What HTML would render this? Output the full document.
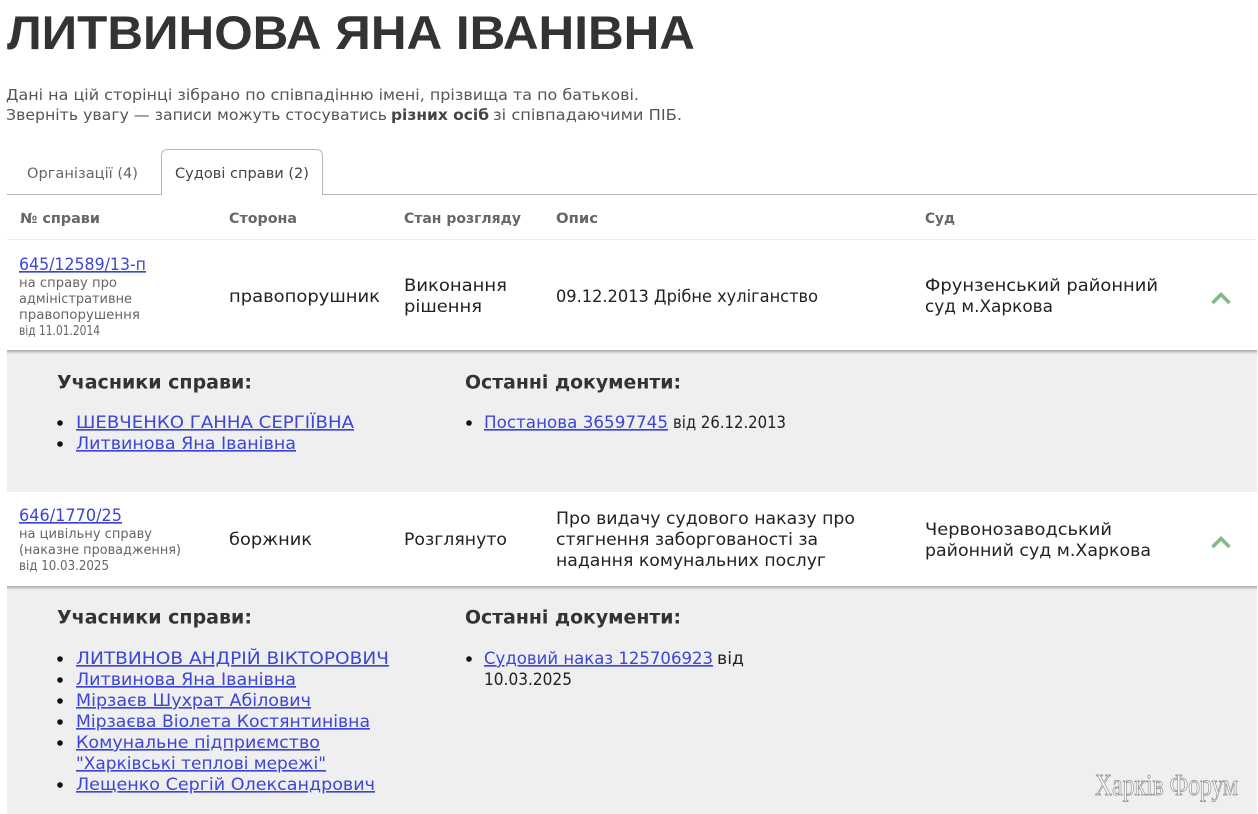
<!DOCTYPE html>
<html lang="uk"><head><meta charset="utf-8"><title>Литвинова Яна Іванівна</title>
<style>
html,body{margin:0;padding:0;background:#fff;width:1258px;height:814px;overflow:hidden}
svg{display:block}
text{font-family:"DejaVu Sans","Liberation Sans",sans-serif;font-size:16.5px;fill:#222;white-space:pre}
.t{font-family:"Liberation Sans",sans-serif;font-size:47px;font-weight:bold;fill:#333}
.p{fill:#555;font-size:15.5px}
.b{font-weight:bold;fill:#444}
.tab{fill:#666;font-size:14.5px}
.th{font-weight:bold;font-size:14px;fill:#666}
.s{font-size:13px;fill:#666}
.h{font-weight:bold;font-size:19px;fill:#333}
.l{fill:#3b46d8}
.w{font-family:"Liberation Serif",serif;font-size:31px;fill:#fff;stroke:#8a8a8a;stroke-width:.8px}
</style></head><body>
<svg width="1258" height="814" viewBox="0 0 1258 814" xmlns="http://www.w3.org/2000/svg">
<defs><linearGradient id="g" x1="0" y1="0" x2="0" y2="1"><stop offset="0" stop-color="#a8a8a8"/><stop offset="1" stop-color="#efefef"/></linearGradient></defs>
<text class="t" x="7" y="49" textLength="688" lengthAdjust="spacingAndGlyphs">ЛИТВИНОВА ЯНА ІВАНІВНА</text>
<text class="p" x="6" y="100" textLength="633" lengthAdjust="spacingAndGlyphs">Дані на цій сторінці зібрано по співпадінню імені, прізвища та по батькові.</text>
<text class="p" x="6" y="120" textLength="381" lengthAdjust="spacingAndGlyphs">Зверніть увагу — записи можуть стосуватись</text>
<text class="p b" x="391" y="120" textLength="98" lengthAdjust="spacingAndGlyphs">різних осіб</text>
<text class="p" x="493" y="120" textLength="189" lengthAdjust="spacingAndGlyphs">зі співпадаючими ПІБ.</text>

<path d="M7 194.5H161.5V155a5.500 5.500 0 0 1 5.500-5.500H317a5.500 5.500 0 0 1 5.500 5.500V194.500H1257" fill="none" stroke="#b5b5b5"/>
<text class="tab" x="27" y="178" textLength="111" lengthAdjust="spacingAndGlyphs">Організації (4)</text>
<text class="tab" x="175" y="178" textLength="134" lengthAdjust="spacingAndGlyphs" style="fill:#444">Судові справи (2)</text>

<text class="th" x="20" y="223" textLength="80" lengthAdjust="spacingAndGlyphs">№ справи</text>
<text class="th" x="229" y="223" textLength="68" lengthAdjust="spacingAndGlyphs">Сторона</text>
<text class="th" x="404" y="223" textLength="117" lengthAdjust="spacingAndGlyphs">Стан розгляду</text>
<text class="th" x="556" y="223" textLength="42" lengthAdjust="spacingAndGlyphs">Опис</text>
<text class="th" x="925" y="223" textLength="30" lengthAdjust="spacingAndGlyphs">Суд</text>
<rect x="7" y="239" width="1250" height="1" fill="#eeeeee"/>

<!-- row 1 -->
<text class="l" x="19" y="270" textLength="127" lengthAdjust="spacingAndGlyphs" text-decoration="underline">645/12589/13-п</text>
<text class="s" x="19" y="287" textLength="98" lengthAdjust="spacingAndGlyphs">на справу про</text>
<text class="s" x="19" y="303" textLength="113" lengthAdjust="spacingAndGlyphs">адміністративне</text>
<text class="s" x="19" y="319" textLength="121" lengthAdjust="spacingAndGlyphs">правопорушення</text>
<text class="s" x="19" y="335" textLength="81" lengthAdjust="spacingAndGlyphs">від 11.01.2014</text>
<text x="229" y="302" textLength="151" lengthAdjust="spacingAndGlyphs">правопорушник</text>
<text x="404" y="291" textLength="103" lengthAdjust="spacingAndGlyphs">Виконання</text>
<text x="404" y="312" textLength="78" lengthAdjust="spacingAndGlyphs">рішення</text>
<text x="556" y="302" textLength="262" lengthAdjust="spacingAndGlyphs">09.12.2013 Дрібне хуліганство</text>
<text x="925" y="291" textLength="233" lengthAdjust="spacingAndGlyphs">Фрунзенський районний</text>
<text x="925" y="312" textLength="128" lengthAdjust="spacingAndGlyphs">суд м.Харкова</text>
<path d="M1212.500 303L1221 294.500L1229.500 303" fill="none" stroke="#80bb88" stroke-width="3.600"/>

<!-- panel 1 -->
<rect x="7" y="351" width="1250" height="141" fill="#efefef"/>
<rect x="7" y="350" width="1250" height="4" fill="url(#g)"/>
<text class="h" x="57" y="388.500" textLength="195" lengthAdjust="spacingAndGlyphs">Учасники справи:</text>
<text class="h" x="465" y="388.500" textLength="216" lengthAdjust="spacingAndGlyphs">Останні документи:</text>
<circle cx="60" cy="423" r="2.800" fill="#111"/>
<circle cx="60" cy="444" r="2.800" fill="#111"/>
<text class="l" x="76" y="428" textLength="278" lengthAdjust="spacingAndGlyphs" text-decoration="underline">ШЕВЧЕНКО ГАННА СЕРГІЇВНА</text>
<text class="l" x="76" y="449" textLength="220" lengthAdjust="spacingAndGlyphs" text-decoration="underline">Литвинова Яна Іванівна</text>
<circle cx="469" cy="423" r="2.800" fill="#111"/>
<text class="l" x="484" y="428" textLength="184" lengthAdjust="spacingAndGlyphs" text-decoration="underline">Постанова 36597745</text>
<text x="673" y="428" textLength="113" lengthAdjust="spacingAndGlyphs">від 26.12.2013</text>

<!-- row 2 -->
<text class="l" x="19" y="521" textLength="103" lengthAdjust="spacingAndGlyphs" text-decoration="underline">646/1770/25</text>
<text class="s" x="19" y="538" textLength="133" lengthAdjust="spacingAndGlyphs">на цивільну справу</text>
<text class="s" x="19" y="554" textLength="162" lengthAdjust="spacingAndGlyphs">(наказне провадження)</text>
<text class="s" x="19" y="570" textLength="90" lengthAdjust="spacingAndGlyphs">від 10.03.2025</text>
<text x="229" y="545" textLength="83" lengthAdjust="spacingAndGlyphs">боржник</text>
<text x="404" y="545" textLength="103" lengthAdjust="spacingAndGlyphs">Розглянуто</text>
<text x="556" y="524" textLength="299" lengthAdjust="spacingAndGlyphs">Про видачу судового наказу про</text>
<text x="556" y="545" textLength="262" lengthAdjust="spacingAndGlyphs">стягнення заборгованості за</text>
<text x="556" y="566" textLength="270" lengthAdjust="spacingAndGlyphs">надання комунальних послуг</text>
<text x="925" y="535" textLength="187" lengthAdjust="spacingAndGlyphs">Червонозаводський</text>
<text x="925" y="556" textLength="226" lengthAdjust="spacingAndGlyphs">районний суд м.Харкова</text>
<path d="M1212.500 547L1221 538.500L1229.500 547" fill="none" stroke="#80bb88" stroke-width="3.600"/>

<!-- panel 2 -->
<rect x="7" y="587" width="1250" height="227" fill="#efefef"/>
<rect x="7" y="586" width="1250" height="4" fill="url(#g)"/>
<text class="h" x="57" y="623.500" textLength="195" lengthAdjust="spacingAndGlyphs">Учасники справи:</text>
<text class="h" x="465" y="623.500" textLength="216" lengthAdjust="spacingAndGlyphs">Останні документи:</text>
<circle cx="60" cy="659" r="2.800" fill="#111"/>
<circle cx="60" cy="680" r="2.800" fill="#111"/>
<circle cx="60" cy="701" r="2.800" fill="#111"/>
<circle cx="60" cy="722" r="2.800" fill="#111"/>
<circle cx="60" cy="743" r="2.800" fill="#111"/>
<circle cx="60" cy="785" r="2.800" fill="#111"/>
<text class="l" x="76" y="664" textLength="313" lengthAdjust="spacingAndGlyphs" text-decoration="underline">ЛИТВИНОВ АНДРІЙ ВІКТОРОВИЧ</text>
<text class="l" x="76" y="685" textLength="220" lengthAdjust="spacingAndGlyphs" text-decoration="underline">Литвинова Яна Іванівна</text>
<text class="l" x="76" y="706" textLength="235" lengthAdjust="spacingAndGlyphs" text-decoration="underline">Мірзаєв Шухрат Абілович</text>
<text class="l" x="76" y="727" textLength="294" lengthAdjust="spacingAndGlyphs" text-decoration="underline">Мірзаєва Віолета Костянтинівна</text>
<text class="l" x="76" y="748" textLength="244" lengthAdjust="spacingAndGlyphs" text-decoration="underline">Комунальне підприємство</text>
<text class="l" x="76" y="769" textLength="250" lengthAdjust="spacingAndGlyphs" text-decoration="underline">"Харківські теплові мережі"</text>
<text class="l" x="76" y="790" textLength="299" lengthAdjust="spacingAndGlyphs" text-decoration="underline">Лещенко Сергій Олександрович</text>
<circle cx="469" cy="659" r="2.800" fill="#111"/>
<text class="l" x="484" y="664" textLength="229" lengthAdjust="spacingAndGlyphs" text-decoration="underline">Судовий наказ 125706923</text>
<text x="717" y="664" textLength="27" lengthAdjust="spacingAndGlyphs">від</text>
<text x="484" y="685" textLength="88" lengthAdjust="spacingAndGlyphs">10.03.2025</text>

<text class="w" x="1095" y="795" textLength="143" lengthAdjust="spacingAndGlyphs">Харків Форум</text>
</svg>
</body></html>
